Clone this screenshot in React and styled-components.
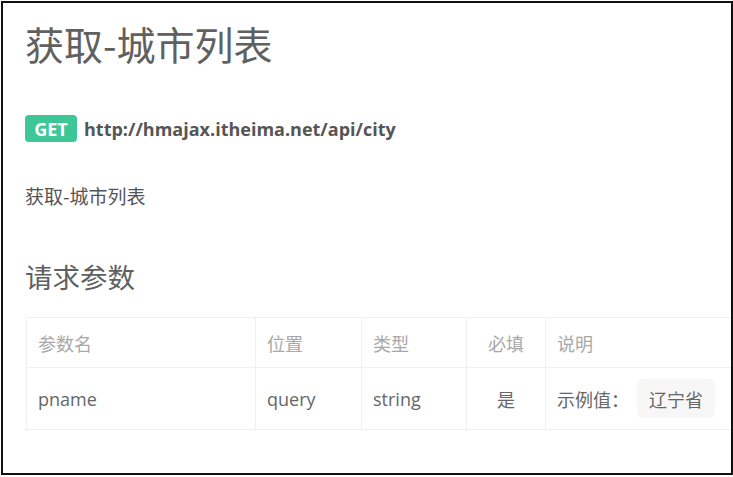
import styled, { createGlobalStyle } from "styled-components";

const GlobalStyle = createGlobalStyle`
    html, body {
        margin: 0;
        padding: 0;
        background: #fff;
    }
    body {
        font-family: "Open Sans", "Noto Sans CJK SC", sans-serif;
    }
`;

const Frame = styled.div`
    box-sizing: border-box;
    margin: 1px 0 0 1px;
    width: 732px;
    height: 474px;
    border: 2px solid #111;
    overflow: hidden;
    padding: 0 0 0 22px;
`;

const Title = styled.h1`
    margin: 0;
    padding-top: 17px;
    font-family: "Noto Sans CJK SC", sans-serif;
    font-size: 39px;
    font-weight: 400;
    line-height: 46px;
    color: #606060;
`;

const Endpoint = styled.div`
    display: flex;
    align-items: center;
    gap: 7px;
    margin-top: 49px;
`;

const Method = styled.span`
    display: inline-flex;
    align-items: center;
    justify-content: center;
    width: 52px;
    height: 27px;
    border-radius: 4px;
    background: #3ec796;
    color: #fff;
    font-family: "Open Sans", sans-serif;
    font-weight: 700;
    font-size: 18px;
`;

const Url = styled.span`
    font-family: "Open Sans", sans-serif;
    font-weight: 700;
    font-size: 18px;
    color: #555;
`;

const Desc = styled.p`
    margin: 41px 0 0;
    font-family: "Noto Sans CJK SC", sans-serif;
    font-size: 19px;
    line-height: 26px;
    color: #555;
`;

const Section = styled.h2`
    margin: 49px 0 0;
    font-family: "Noto Sans CJK SC", sans-serif;
    font-size: 27.5px;
    font-weight: 400;
    line-height: 36px;
    color: #606060;
`;

const Table = styled.table`
    margin-top: 23px;
    margin-left: 1px;
    border-collapse: collapse;
    table-layout: fixed;
    width: 819px;
    font-family: "Open Sans", "Noto Sans CJK SC", sans-serif;
    font-size: 18px;
`;

const Th = styled.th`
    box-sizing: border-box;
    height: 50px;
    padding: 0 11px;
    border: 1px solid #f0f0f0;
    text-align: ${(p) => p.$align || "left"};
    font-weight: 400;
    color: #a8a8a8;
    width: ${(p) => p.$w}px;
`;

const Td = styled.td`
    height: 61px;
    padding: 0 11px;
    border: 1px solid #f0f0f0;
    text-align: ${(p) => p.$align || "left"};
    color: #666;
    white-space: nowrap;
`;

const Example = styled.span`
    display: inline-flex;
    align-items: center;
    height: 39px;
    padding: 0 12px;
    margin-left: 8px;
    border-radius: 6px;
    background: #f7f7f7;
    color: #666;
`;

const columns = [
    { name: "参数名", w: 229 },
    { name: "位置", w: 106 },
    { name: "类型", w: 105 },
    { name: "必填", w: 79, align: "center" },
    { name: "说明", w: 300 },
];

export default function App() {
    return (
        <>
            <GlobalStyle />
            <Frame>
                <Title>获取-城市列表</Title>
                <Endpoint>
                    <Method>GET</Method>
                    <Url>http://hmajax.itheima.net/api/city</Url>
                </Endpoint>
                <Desc>获取-城市列表</Desc>
                <Section>请求参数</Section>
                <Table>
                    <thead>
                        <tr>
                            {columns.map((c) => (
                                <Th key={c.name} $w={c.w} $align={c.align}>{c.name}</Th>
                            ))}
                        </tr>
                    </thead>
                    <tbody>
                        <tr>
                            <Td>pname</Td>
                            <Td>query</Td>
                            <Td>string</Td>
                            <Td $align="center">是</Td>
                            <Td>示例值：<Example>辽宁省</Example></Td>
                        </tr>
                    </tbody>
                </Table>
            </Frame>
        </>
    );
}
